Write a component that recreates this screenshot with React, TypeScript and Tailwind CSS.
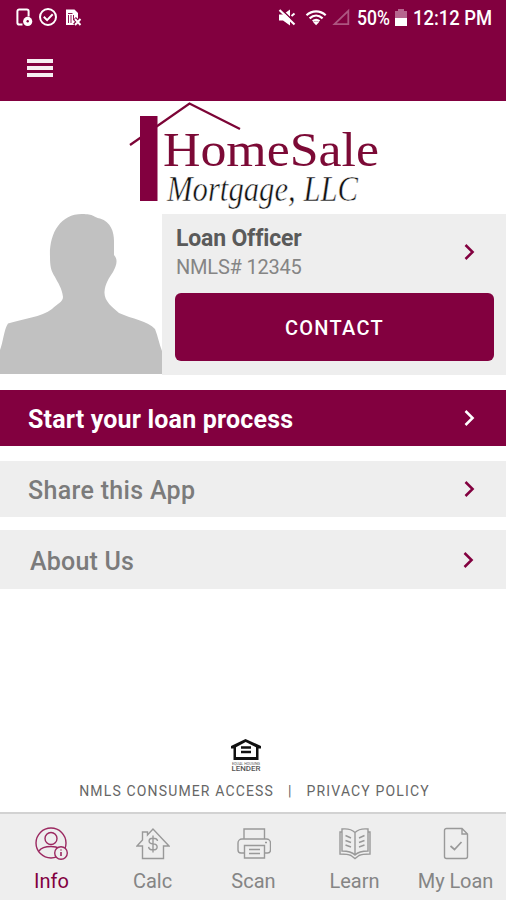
import React from "react";

function Chevron({ className }: { className: string }) {
  return (
    <svg width="12" height="18" viewBox="0 0 12 18" fill="none" stroke="currentColor" strokeWidth="2.5" className={className}>
      <path d="M2.500 2 9.600 9 2.500 16" />
    </svg>
  );
}

function StatusBar() {
  return (
    <div className="flex h-9 items-center justify-between pl-4 pr-[14px]">
      <svg width="68" height="20" viewBox="0 0 68 20" fill="none" stroke="#fff" strokeWidth="2">
        <path d="M6.5 16.5H3.2a1.8 1.8 0 0 1-1.8-1.8V3.3a1.8 1.8 0 0 1 1.8-1.8h7.6a1.8 1.8 0 0 1 1.8 1.8v5.2" />
        <circle cx="11.7" cy="13.4" r="4.6" fill="#fff" stroke="none" />
        <circle cx="11.7" cy="13.2" r="1.200" fill="#82003f" stroke="none" />
        <circle cx="32" cy="9" r="8" />
        <path d="m27.8 8.7 3.3 3.4 5.6-5.8" strokeWidth="2" />
        <path d="M50 1.5h8.5L62 5v12H50z" fill="#fff" stroke="none" />
        <path d="M52 5.5h4.5M52.5 7v8M55 7v8M57.5 7v5" stroke="#82003f" strokeWidth=".9" />
        <path d="m58.5 10.5 6.5 6.7m0-6.7-6.5 6.7" stroke="#82003f" strokeWidth="4" />
        <path d="m59 11 5.5 6m0-6-5.5 6" strokeWidth="1.9" />
      </svg>
      <div className="flex items-center text-white">
        <svg width="72" height="20" viewBox="0 0 72 20" fill="none" stroke="#fff">
          <path d="M1 6.500h4l7-5v16l-7-5H1z" fill="#fff" stroke="none" />
          <path d="m3 1 15 14.5" stroke="#82003f" strokeWidth="1.600" />
          <path d="m1.5 2 15 14.5" strokeWidth="2.200" />
          <path d="m13.500 8 3-2.500" strokeWidth="2" />
          <path d="M28.5 7.2c5.7-5.2 13.5-5.2 19.2 0M31.6 10.4c4-3.6 9-3.6 13 0M34.7 13.2c2.3-1.7 4.6-1.7 6.8 0" strokeWidth="2.2" />
          <path d="m35.2 14.2 2.9 3 2.9-3c-1.8-1.3-4-1.3-5.8 0z" fill="#fff" stroke="none" />
          <path d="M56.5 16.2h13.8V2.8z" stroke="#ad5580" strokeWidth="1.8" />
        </svg>
        <span className="ml-[7px] w-[33px] origin-left scale-x-[.88] whitespace-nowrap text-[20px] font-medium leading-5">50%</span>
        <svg width="12" height="20" viewBox="0 0 12 20" className="ml-[5px]">
          <path d="M0 3h3V1h6v2h3v8H0z" fill="#b6668e" />
          <path d="M0 10h12v8H0z" fill="#fff" />
        </svg>
        <span className="ml-[6px] w-[79px] origin-left scale-x-[.92] whitespace-nowrap text-[20px] font-medium leading-5">12:12 PM</span>
      </div>
    </div>
  );
}

function Logo() {
  return (
    <svg width="260" height="113" viewBox="125 101 260 113" className="ml-[125px] block overflow-visible">
      <path d="m130 145 59.5-41.5L240 129" fill="none" stroke="#7c0436" strokeWidth="2.3" />
      <path d="M140 116h17.500v85H140z" fill="#82003f" />
      <text x="163" y="165.500" textLength="216" lengthAdjust="spacingAndGlyphs" fontSize="49" fill="#7c0a36" className="font-['Palatino_Linotype','Liberation_Serif',serif]">HomeSale</text>
      <text x="167" y="200.500" textLength="191" lengthAdjust="spacingAndGlyphs" fontSize="35" fill="#111" stroke="#fff" strokeWidth="0.5" className="font-['Monotype_Corsiva','Liberation_Serif',cursive] italic">Mortgage, LLC</text>
    </svg>
  );
}

function Officer() {
  return (
    <section className="flex h-[161px]">
      <svg width="162" height="161" viewBox="0 0 162 161" className="shrink-0">
        <path d="M0 160V136C3 129 4 115 8 109.500C22 105 42 103 52 95C57 90 63 88 63 83C62 74 58 69 55 63C51 57 50 52 50 43C49 20 60 0 82 0C94 0 93 3 100 4.500C111 8 114 18 114 27V41C118 45 117 51 113 58C109 64 105 70 104.500 78C104 87 112 93 119 99C132 105 148 107 155 115C158 122 159 130 162 137V160Z" fill="#c1c1c1" />
      </svg>
      <div className="flex-1 bg-[#eeeeee] pl-[13px] pr-3">
        <div className="flex h-[79px] items-center justify-between pr-[19px]">
          <div className="-mt-[2px] pl-[1px]">
            <div className="text-[23px] font-bold leading-[28px] tracking-[-0.18px] text-[#5a5a5a]">Loan Officer</div>
            <div className="text-[20px] leading-[28px] tracking-[-0.2px] text-[#858585]">NMLS# 12345</div>
          </div>
          <Chevron className="-mt-[3px] text-[#82003f]" />
        </div>
        <button className="block h-[68px] w-full rounded-[6px] bg-[#82003f] pt-[2px] text-[20px] font-medium tracking-[1.3px] text-white">CONTACT</button>
      </div>
    </section>
  );
}

const rows = [
  { label: "Start your loan process", box: "h-14 bg-[#82003f] text-white pl-[28px] pr-[31px] mt-[15px]", text: "pt-[3px] font-bold tracking-[0.18px]", arrow: "text-white" },
  { label: "Share this App", box: "h-14 bg-[#eeeeee] text-[#7b7b7b] pl-[28px] pr-[31px] mt-[15px]", text: "pt-[3px] font-medium tracking-[0.32px]", arrow: "text-[#82003f]" },
  { label: "About Us", box: "h-[59px] bg-[#eeeeee] text-[#7b7b7b] pl-[30px] pr-[32px] pt-[1px] mt-[13px]", text: "pt-[3px] font-medium tracking-[0.2px]", arrow: "text-[#82003f]" },
];

function InfoIcon() {
  return (
    <>
      <circle cx="16" cy="16" r="15" /><circle cx="16" cy="11.500" r="6" />
      <path d="M4 24c2-3 6-4.500 12-4.500 4 0 7 1 9 2" />
      <circle cx="26" cy="26" r="6.300" fill="#eee" /><path d="M26 25v4M26 22.500v1" strokeWidth="1.600" />
    </>
  );
}
function CalcIcon() {
  return (
    <>
      <path d="M1 19 6.500 13V5h5v3L17 2l16 17h-5.500v12.500h-21V19z" />
      <path d="M21.500 14c-.3-2-1.700-2.700-4.500-2.700-5.200 0-5.200 5.400 0 5.600 5.500.2 5.500 6 0 6-2.700 0-4.200-.9-4.400-3M17 8.500v17" />
    </>
  );
}
function ScanIcon() {
  return (
    <>
      <path d="M7 12V2h20.500v10M7 26H4a3 3 0 0 1-3-3v-7a4 4 0 0 1 4-4h24.500a4 4 0 0 1 4 4v7a3 3 0 0 1-3 3h-3" />
      <path d="M7.500 18.500h20V31h-20zM12 22.500h11M12 26.500h11" /><path d="M28 15.500h2" />
    </>
  );
}
function LearnIcon() {
  return (
    <>
      <path d="M17 5.500C14 2.500 9 1.500 4 2v22c5 0 10 1 13 4 3-3 8-4 13-4V2c-5-.5-10 .5-13 3.500zM17 5.500V28" />
      <path d="M4 5H2v22c4 0 8 0 11 1.500l4 3 4-3c3-1.500 7-1.500 11-1.500V5h-2" />
      <path d="m7.500 8.500 5.500 2.500M7.500 13.500l5.500 2M21 11l5.500-2.500M21 15.500l5.500-2M7.500 18l5.500 2M21 20l5.500-2" />
    </>
  );
}
function LoanIcon() {
  return (
    <>
      <path d="M7.500 1.500H23l5.500 5.500v22.500a2 2 0 0 1-2 2h-19a2 2 0 0 1-2-2v-26a2 2 0 0 1 2-2zM23 1.500V7h5.500" />
      <path d="m11.500 19 4 3.500 7-7.500" strokeWidth="1.700" />
    </>
  );
}

const tabs = [
  { label: "Info", icon: <InfoIcon />, color: "text-[#9b2860]", text: "text-[#82003f]" },
  { label: "Calc", icon: <CalcIcon />, color: "text-[#999]", text: "text-[#858585]" },
  { label: "Scan", icon: <ScanIcon />, color: "text-[#999]", text: "text-[#858585]" },
  { label: "Learn", icon: <LearnIcon />, color: "text-[#999]", text: "text-[#858585]" },
  { label: "My Loan", icon: <LoanIcon />, color: "text-[#999]", text: "text-[#858585] tracking-[-0.1px]" },
];

export default function App() {
  return (
    <main className="flex h-[900px] w-[506px] flex-col overflow-hidden bg-white font-['Roboto',sans-serif]">
      <header className="h-[101px] shrink-0 bg-[#82003f]">
        <StatusBar />
        <button className="ml-[27px] mt-[23px] flex w-[26px] flex-col gap-[3px]" aria-label="Menu">
          <span className="h-1 w-full bg-[#f7eef2]" /><span className="h-1 w-full bg-[#f7eef2]" /><span className="h-1 w-full bg-[#f7eef2]" />
        </button>
      </header>
      <Logo />
      <Officer />
      {rows.map((r) => (
        <div key={r.label} className={`flex shrink-0 items-center justify-between ${r.box}`}>
          <span className={`whitespace-nowrap text-[25px] ${r.text}`}>{r.label}</span>
          <Chevron className={r.arrow} />
        </div>
      ))}
      <footer className="mt-auto flex flex-col items-center pb-[11px]">
        <svg width="32" height="35" viewBox="0 0 32 35" className="-ml-[14px] mb-[8px]">
          <path d="M1 10.500V8L15.500 1 31 8v2.500h-2.500V22H3.500V10.500z" fill="#111" />
          <path d="M6 9.300 15.700 4 26 9.300V19H6z" fill="#fff" />
          <path d="M11 9.500h10M11 14h10" stroke="#111" strokeWidth="2.600" />
          <text x="2" y="26.500" fontSize="4" textLength="28" lengthAdjust="spacingAndGlyphs" fill="#555">EQUAL HOUSING</text>
          <text x="1.500" y="33" fontSize="8" fontWeight="500" textLength="29" lengthAdjust="spacingAndGlyphs" fill="#555">LENDER</text>
        </svg>
        <div className="flex items-center whitespace-nowrap pl-[3px] text-[14px] leading-5 tracking-[1.15px] text-[#666]">
          <span>NMLS CONSUMER ACCESS</span><span className="mx-[14px]">|</span><span>PRIVACY POLICY</span>
        </div>
      </footer>
      <nav className="grid h-[88px] shrink-0 grid-cols-5 border-t-2 border-[#d2d2d2] bg-[#eeeeee] pl-[1px]">
        {tabs.map((t) => (
          <div key={t.label} className="flex flex-col items-center pt-[13px]">
            <svg width="34" height="34" viewBox="0 0 34 34" fill="none" stroke="currentColor" strokeWidth="1.400" className={t.color}>{t.icon}</svg>
            <span className={`mt-[6px] whitespace-nowrap text-[20px] leading-7 ${t.text}`}>{t.label}</span>
          </div>
        ))}
      </nav>
    </main>
  );
}
